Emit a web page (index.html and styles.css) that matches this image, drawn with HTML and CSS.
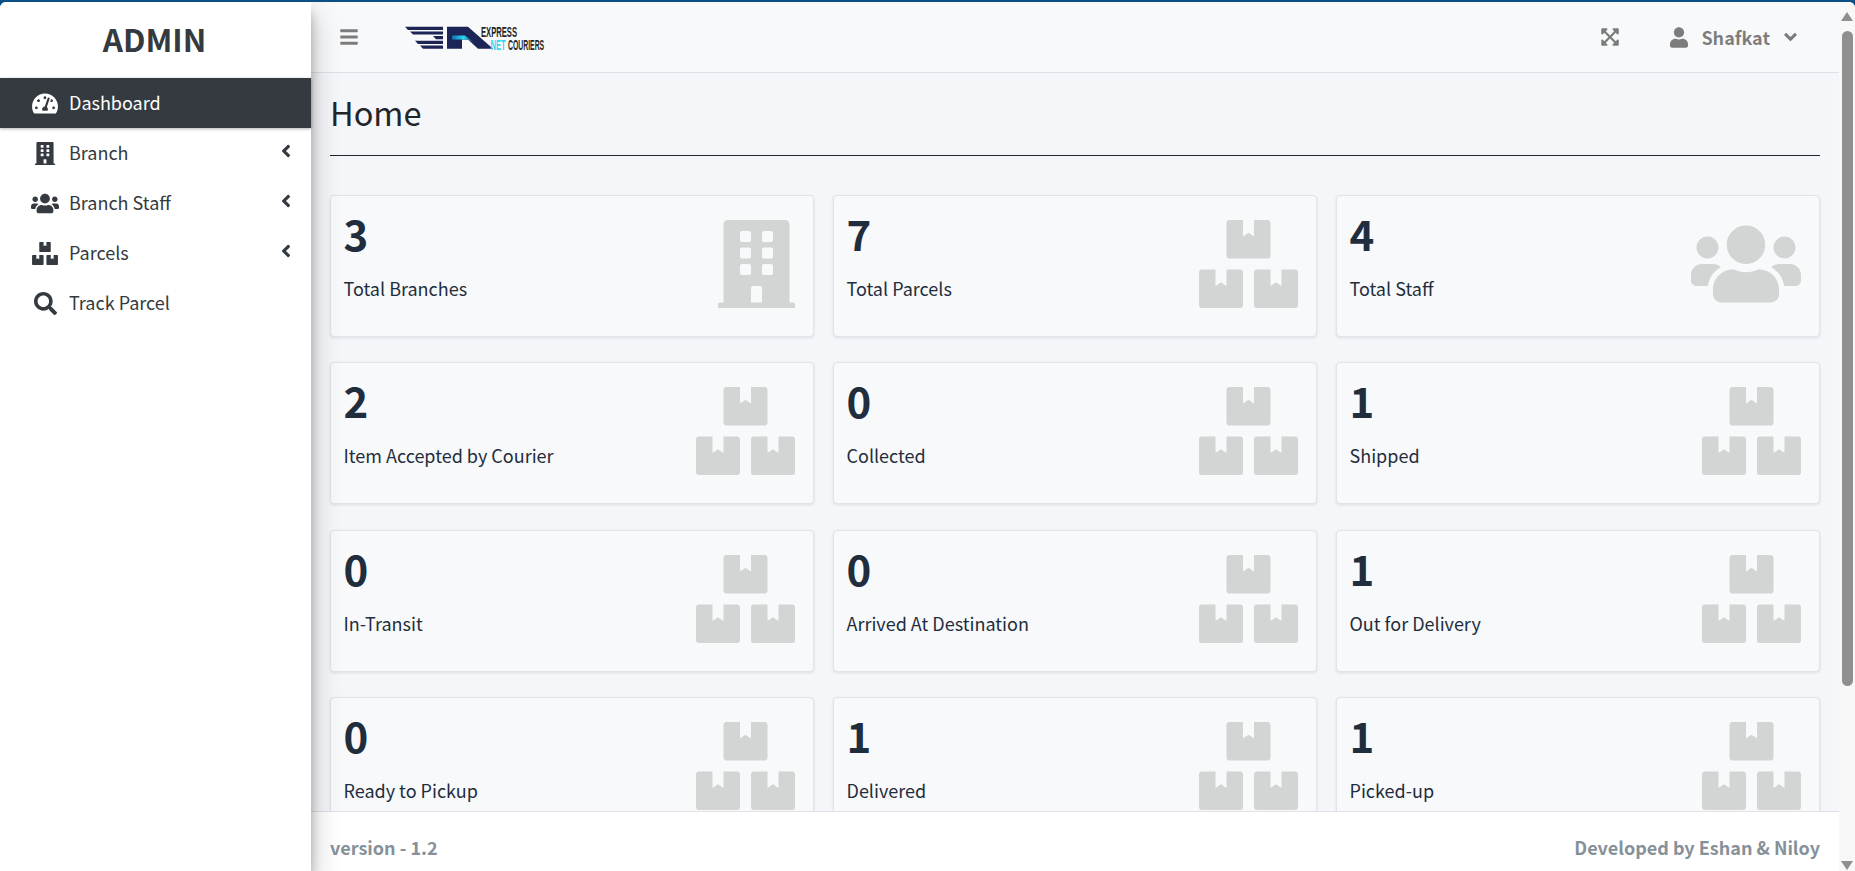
FILE: index.html
```html
<!DOCTYPE html>
<html>
<head>
<meta charset="utf-8">
<title>Dashboard</title>
<link rel="stylesheet" href="styles.css">
</head>
<body>
<svg class="sprite" xmlns="http://www.w3.org/2000/svg">
	<symbol id="i-gauge" viewBox="0 0 576 512"><path d="M288 32C128.94 32 0 160.94 0 320c0 52.8 14.25 102.26 39.06 144.8 5.61 9.62 16.3 15.2 27.44 15.2h443c11.14 0 21.83-5.58 27.44-15.2C561.75 422.26 576 372.8 576 320c0-159.06-128.94-288-288-288zm0 64c14.71 0 26.58 10.13 30.32 23.65-1.11 2.26-2.64 4.23-3.45 6.67l-9.22 27.67c-5.13 3.49-10.97 6.01-17.64 6.01-17.67 0-32-14.33-32-32S270.33 96 288 96zM96 384c-17.67 0-32-14.33-32-32s14.33-32 32-32 32 14.33 32 32-14.33 32-32 32zm48-160c-17.67 0-32-14.33-32-32s14.33-32 32-32 32 14.33 32 32-14.33 32-32 32zm246.77-72.41l-61.33 184C343.13 347.33 352 364.54 352 384c0 11.72-3.38 22.55-8.88 32H232.88c-5.5-9.45-8.88-20.28-8.88-32 0-33.94 26.5-61.43 59.9-63.59l61.34-184.01c4.17-12.56 17.73-19.45 30.36-15.17 12.57 4.19 19.35 17.79 15.17 30.36zm14.66 57.2l15.52-46.55c3.47-1.29 7.13-2.23 11.05-2.23 17.67 0 32 14.33 32 32s-14.33 32-32 32c-11.38-.01-20.89-6.28-26.57-15.22zM480 384c-17.67 0-32-14.33-32-32s14.33-32 32-32 32 14.33 32 32-14.33 32-32 32z"/></symbol>
	<symbol id="i-building" viewBox="0 0 448 512"><path d="M436 480h-20V24c0-13.255-10.745-24-24-24H56C42.745 0 32 10.745 32 24v456H12c-6.627 0-12 5.373-12 12v20h448v-20c0-6.627-5.373-12-12-12zM128 76c0-6.627 5.373-12 12-12h40c6.627 0 12 5.373 12 12v40c0 6.627-5.373 12-12 12h-40c-6.627 0-12-5.373-12-12V76zm0 96c0-6.627 5.373-12 12-12h40c6.627 0 12 5.373 12 12v40c0 6.627-5.373 12-12 12h-40c-6.627 0-12-5.373-12-12v-40zm52 148h-40c-6.627 0-12-5.373-12-12v-40c0-6.627 5.373-12 12-12h40c6.627 0 12 5.373 12 12v40c0 6.627-5.373 12-12 12zm76 160h-64v-84c0-6.627 5.373-12 12-12h40c6.627 0 12 5.373 12 12v84zm64-172c0 6.627-5.373 12-12 12h-40c-6.627 0-12-5.373-12-12v-40c0-6.627 5.373-12 12-12h40c6.627 0 12 5.373 12 12v40zm0-96c0 6.627-5.373 12-12 12h-40c-6.627 0-12-5.373-12-12v-40c0-6.627 5.373-12 12-12h40c6.627 0 12 5.373 12 12v40zm0-96c0 6.627-5.373 12-12 12h-40c-6.627 0-12-5.373-12-12V76c0-6.627 5.373-12 12-12h40c6.627 0 12 5.373 12 12v40z"/></symbol>
	<symbol id="i-users" viewBox="0 0 640 512"><path d="M96 224c35.3 0 64-28.7 64-64s-28.7-64-64-64-64 28.7-64 64 28.7 64 64 64zm448 0c35.3 0 64-28.7 64-64s-28.7-64-64-64-64 28.7-64 64 28.7 64 64 64zm32 32h-64c-17.6 0-33.5 7.1-45.1 18.6 40.3 22.1 68.9 62 75.1 109.4h66c17.7 0 32-14.3 32-32v-32c0-35.3-28.7-64-64-64zm-256 0c61.9 0 112-50.1 112-112S381.9 32 320 32 208 82.1 208 144s50.1 112 112 112zm76.8 32h-8.3c-20.8 10-43.9 16-68.5 16s-47.6-6-68.5-16h-8.3C179.6 288 128 339.6 128 403.2V432c0 26.5 21.5 48 48 48h288c26.5 0 48-21.5 48-48v-28.8c0-63.6-51.6-115.2-115.2-115.2zm-223.7-13.4C161.5 263.1 145.6 256 128 256H64c-35.3 0-64 28.7-64 64v32c0 17.7 14.3 32 32 32h65.9c6.3-47.4 34.9-87.3 75.2-109.4z"/></symbol>
	<symbol id="i-boxes" viewBox="0 0 576 512"><path d="M560 288h-80v96l-32-21.3-32 21.3v-96h-80c-8.8 0-16 7.2-16 16v192c0 8.8 7.2 16 16 16h224c8.8 0 16-7.2 16-16V304c0-8.8-7.2-16-16-16zm-384-64h224c8.8 0 16-7.2 16-16V16c0-8.8-7.2-16-16-16h-80v96l-32-21.3L256 96V0h-80c-8.8 0-16 7.2-16 16v192c0 8.8 7.2 16 16 16zm64 64h-80v96l-32-21.3L96 384v-96H16c-8.8 0-16 7.2-16 16v192c0 8.8 7.2 16 16 16h224c8.8 0 16-7.2 16-16V304c0-8.8-7.2-16-16-16z"/></symbol>
	<symbol id="i-search" viewBox="0 0 512 512"><path d="M505 442.7L405.3 343c-4.5-4.5-10.6-7-17-7H372c27.6-35.3 44-79.7 44-128C416 93.1 322.9 0 208 0S0 93.1 0 208s93.1 208 208 208c48.3 0 92.7-16.4 128-44v16.3c0 6.4 2.5 12.5 7 17l99.7 99.7c9.4 9.4 24.6 9.4 33.9 0l28.3-28.3c9.4-9.4 9.4-24.6.1-34zM208 336c-70.7 0-128-57.2-128-128 0-70.7 57.2-128 128-128 70.7 0 128 57.2 128 128 0 70.7-57.2 128-128 128z"/></symbol>
	<symbol id="i-left" viewBox="0 0 256 512"><path d="M31.7 239l136-136c9.4-9.4 24.6-9.4 33.9 0l22.6 22.6c9.4 9.4 9.4 24.6 0 33.9L127.9 256l96.4 96.4c9.4 9.4 9.4 24.6 0 33.9L201.7 409c-9.4 9.4-24.6 9.4-33.9 0l-136-136c-9.5-9.4-9.5-24.6-.1-34z"/></symbol>
	<symbol id="i-down" viewBox="0 0 320 512"><path d="M143 352.3L7 216.3c-9.4-9.4-9.4-24.6 0-33.9l22.6-22.6c9.4-9.4 24.6-9.4 33.9 0l96.4 96.4 96.4-96.4c9.4-9.4 24.6-9.4 33.9 0l22.6 22.6c9.4 9.4 9.4 24.6 0 33.9l-136 136c-9.2 9.4-24.4 9.4-33.8 0z"/></symbol>
	<symbol id="i-bars" viewBox="0 0 448 512"><path d="M16 132h416c8.837 0 16-7.163 16-16V76c0-8.837-7.163-16-16-16H16C7.163 60 0 67.163 0 76v40c0 8.837 7.163 16 16 16zm0 160h416c8.837 0 16-7.163 16-16v-40c0-8.837-7.163-16-16-16H16c-8.837 0-16 7.163-16 16v40c0 8.837 7.163 16 16 16zm0 160h416c8.837 0 16-7.163 16-16v-40c0-8.837-7.163-16-16-16H16c-8.837 0-16 7.163-16 16v40c0 8.837 7.163 16 16 16z"/></symbol>
	<symbol id="i-user" viewBox="0 0 448 512"><path d="M224 256c70.7 0 128-57.3 128-128S294.7 0 224 0 96 57.3 96 128s57.3 128 128 128zm89.6 32h-16.7c-22.2 10.2-46.9 16-72.9 16s-50.6-5.8-72.9-16h-16.7C60.2 288 0 348.2 0 422.4V464c0 26.5 21.5 48 48 48h352c26.5 0 48-21.5 48-48v-41.6c0-74.2-60.2-134.4-134.4-134.4z"/></symbol>
	<symbol id="i-expand" viewBox="0 0 448 512"><path d="M448 344v112a23.94 23.94 0 0 1-24 24H312c-21.39 0-32.09-25.9-17-41l36.2-36.2L224 295.6 116.77 402.9 153 439c15.09 15.1 4.39 41-17 41H24a23.94 23.94 0 0 1-24-24V344c0-21.4 25.89-32.1 41-17l36.19 36.2L184.46 256 77.18 148.7 41 185c-15.1 15.1-41 4.4-41-17V56a23.94 23.94 0 0 1 24-24h112c21.39 0 32.09 25.9 17 41l-36.2 36.2L224 216.4l107.23-107.3L295 73c-15.09-15.1-4.39-41 17-41h112a23.94 23.94 0 0 1 24 24v112c0 21.4-25.89 32.1-41 17l-36.19-36.2L263.54 256l107.28 107.3L407 327.1c15.1-15.2 41-4.5 41 16.9z"/></symbol>
</svg>

<div class="app">
	<aside class="sidebar">
		<div class="brand">ADMIN</div>
		<ul class="menu">
			<li class="menu-item active"><span class="menu-ico"><svg class="ico-wide"><use href="#i-gauge"/></svg></span><span class="menu-label">Dashboard</span></li>
			<li class="menu-item"><span class="menu-ico"><svg class="ico-tall"><use href="#i-building"/></svg></span><span class="menu-label">Branch</span><svg class="caret"><use href="#i-left"/></svg></li>
			<li class="menu-item"><span class="menu-ico"><svg class="ico-users"><use href="#i-users"/></svg></span><span class="menu-label">Branch Staff</span><svg class="caret"><use href="#i-left"/></svg></li>
			<li class="menu-item"><span class="menu-ico"><svg class="ico-wide"><use href="#i-boxes"/></svg></span><span class="menu-label">Parcels</span><svg class="caret"><use href="#i-left"/></svg></li>
			<li class="menu-item"><span class="menu-ico"><svg class="ico-square"><use href="#i-search"/></svg></span><span class="menu-label">Track Parcel</span></li>
		</ul>
	</aside>

	<div class="main">
		<nav class="navbar">
			<svg class="nav-bars"><use href="#i-bars"/></svg>
			<svg class="logo" viewBox="0 0 140 26" width="140" height="26">
				<defs>
					<linearGradient id="logo-glow" x1="0" y1="0" x2="1" y2="0">
						<stop offset="0" stop-color="#0f6fb0"/>
						<stop offset=".5" stop-color="#27dcf5"/>
						<stop offset="1" stop-color="#1b2559"/>
					</linearGradient>
				</defs>
				<g fill="#1d2557">
					<polygon points="0,.8 38,.8 38,4 3,4"/>
					<polygon points="5,5.4 38,5.4 38,8.6 8,8.6"/>
					<polygon points="28,10 38,10 38,13.2 31,13.2"/>
					<polygon points="10,14.8 38,14.8 38,18 13,18"/>
					<polygon points="15,19.4 38,19.4 38,22.8 18,22.8"/>
					<polygon points="42,.8 63,.8 88,22.8 73,22.8 63,13.5 57,13.5 57,22.8 42,22.8"/>
				</g>
				<polygon points="47,9.5 60,9.5 70,17.5 63,13.5 47,13.5" fill="url(#logo-glow)"/>
				<text class="logo-text" transform="translate(76 11) scale(.545 1)">EXPRESS</text>
				<text class="logo-text logo-net" transform="translate(85.5 24) scale(.54 1)">NET</text>
				<text class="logo-text" transform="translate(103 24) scale(.49 1)">COURIERS</text>
			</svg>
			<svg class="nav-expand"><use href="#i-expand"/></svg>
			<svg class="nav-user"><use href="#i-user"/></svg>
			<span class="nav-name">Shafkat</span>
			<svg class="nav-down"><use href="#i-down"/></svg>
		</nav>

		<section class="content">
			<h1 class="page-title">Home</h1>
			<div class="grid">
				<div class="box"><div class="box-text"><h3>3</h3><p>Total Branches</p></div><svg class="box-ico ico-building"><use href="#i-building"/></svg></div>
				<div class="box"><div class="box-text"><h3>7</h3><p>Total Parcels</p></div><svg class="box-ico ico-boxes"><use href="#i-boxes"/></svg></div>
				<div class="box"><div class="box-text"><h3>4</h3><p>Total Staff</p></div><svg class="box-ico ico-people"><use href="#i-users"/></svg></div>
				<div class="box"><div class="box-text"><h3>2</h3><p>Item Accepted by Courier</p></div><svg class="box-ico ico-boxes"><use href="#i-boxes"/></svg></div>
				<div class="box"><div class="box-text"><h3>0</h3><p>Collected</p></div><svg class="box-ico ico-boxes"><use href="#i-boxes"/></svg></div>
				<div class="box"><div class="box-text"><h3>1</h3><p>Shipped</p></div><svg class="box-ico ico-boxes"><use href="#i-boxes"/></svg></div>
				<div class="box"><div class="box-text"><h3>0</h3><p>In-Transit</p></div><svg class="box-ico ico-boxes"><use href="#i-boxes"/></svg></div>
				<div class="box"><div class="box-text"><h3>0</h3><p>Arrived At Destination</p></div><svg class="box-ico ico-boxes"><use href="#i-boxes"/></svg></div>
				<div class="box"><div class="box-text"><h3>1</h3><p>Out for Delivery</p></div><svg class="box-ico ico-boxes"><use href="#i-boxes"/></svg></div>
				<div class="box"><div class="box-text"><h3>0</h3><p>Ready to Pickup</p></div><svg class="box-ico ico-boxes"><use href="#i-boxes"/></svg></div>
				<div class="box"><div class="box-text"><h3>1</h3><p>Delivered</p></div><svg class="box-ico ico-boxes"><use href="#i-boxes"/></svg></div>
				<div class="box"><div class="box-text"><h3>1</h3><p>Picked-up</p></div><svg class="box-ico ico-boxes"><use href="#i-boxes"/></svg></div>
			</div>
		</section>

		<footer class="footer">
			<b>version - 1.2</b>
			<b>Developed by Eshan &amp; Niloy</b>
		</footer>
	</div>

	<div class="scrollbar">
		<span class="arrow-up"></span>
		<span class="thumb"></span>
		<span class="arrow-down"></span>
	</div>
</div>
</body>
</html>
```
FILE: styles.css
```css
*{margin: 0;padding: 0;box-sizing: border-box;list-style: none;}
html,body{height: 100%;overflow: hidden;}
body{background: #0b4f85;padding-top: 2px;color: #1f2d3d;
	font-family: "Noto Sans CJK SC","Noto Sans CJK JP","Open Sans",sans-serif;font-size: 18px;}
svg{display: block;fill: currentColor;}
.sprite{width: 0;height: 0;position: absolute;}

.app{display: flex;height: 869px;background: #f4f6f9;border-radius: 6px 6px 0 0;overflow: hidden;}

/* sidebar */
.sidebar{width: 311px;flex: none;background: #fff;position: relative;z-index: 2;
	box-shadow: 0 14px 28px rgba(0,0,0,.25),0 10px 10px rgba(0,0,0,.22);}
.brand{height: 76px;line-height: 72px;text-align: center;font-size: 31.5px;font-weight: 700;color: #343a40;padding-right: 2px;}
.menu-item{height: 50px;display: flex;align-items: center;color: #343a40;position: relative;}
.menu-item.active{background: #343a40;color: #fff;box-shadow: 0 1px 3px rgba(0,0,0,.3);}
.menu-ico{width: 69px;padding-left: 32px;display: flex;}
.menu-label{line-height: 24px;padding-bottom: 2px;}
.ico-wide{width: 26px;height: 23px;}
.ico-tall{width: 20px;height: 23px;margin-left: 3px;}
.ico-users{width: 28px;height: 23px;margin-left: -1px;}
.ico-square{width: 23px;height: 23px;margin-left: 2px;}
.caret{width: 10px;height: 20px;margin-left: auto;margin-right: 20px;position: relative;top: -2px;}

/* top bar */
.main{flex: 1;min-width: 0;display: flex;flex-direction: column;}
.navbar{height: 71px;flex: none;display: flex;align-items: center;background: #f8f9fa;
	border-bottom: 1px solid #dee2e6;color: rgba(0,0,0,.5);font-weight: 700;}
.nav-bars{width: 18px;height: 20px;margin-left: 29px;}
.logo{margin-left: 47px;position: relative;top: 2px;}
.logo-text{font-family: "Liberation Sans",sans-serif;font-size: 14px;fill: #262626;font-weight: 700;}
.logo-net{fill: #35d6f0;}
.nav-expand{width: 18px;height: 20px;margin-left: auto;}
.nav-user{width: 18px;height: 21px;margin-left: 51px;}
.nav-name{margin-left: 13px;line-height: 24px;}
.nav-down{width: 13px;height: 20px;margin-left: 14px;margin-right: 42px;}

/* content */
.content{flex: 1;min-height: 0;overflow: hidden;padding: 0 19px;}
.page-title{height: 83px;line-height: 78px;font-size: 32.5px;font-weight: 400;border-bottom: 1px solid #212529;color: #212529;}
.grid{display: grid;grid-template-columns: repeat(3,1fr);gap: 25.4px 19px;margin-top: 39px;}
.box{height: 142px;display: flex;justify-content: space-between;background: #f8f9fa;
	border: 1px solid #e1e4e8;border-radius: 4px;box-shadow: 0 1px 3px rgba(0,0,0,.1);}
.box-text{padding: 12px 0 0 12.5px;}
.box h3{font-size: 42px;line-height: 50px;font-weight: 700;}
.box p{margin-top: 16px;line-height: 28px;}
.box-ico{height: 88px;margin: 24px 18px 0 0;color: rgba(0,0,0,.15);}
.ico-building{width: 77px;}
.ico-boxes{width: 99px;}
.ico-people{width: 110px;}

/* footer */
.footer{height: 60px;flex: none;display: flex;justify-content: space-between;align-items: center;
	background: #fff;border-top: 1px solid #dee2e6;padding: 10px 19px 0;color: #869099;position: relative;}

/* scrollbar */
.scrollbar{width: 16px;flex: none;background: #f8f8f8;display: flex;flex-direction: column;align-items: center;position: relative;}
.arrow-up{width: 0;height: 0;margin-top: 10px;border: 6px solid transparent;border-top: 0;border-bottom: 9px solid #8f8f8f;}
.thumb{width: 11px;height: 655px;margin-top: 10px;background: #8f8f8f;border-radius: 6px;}
.arrow-down{width: 0;height: 0;margin-top: auto;margin-bottom: 1px;border: 6px solid transparent;border-bottom: 0;border-top: 9px solid #8f8f8f;}
```
